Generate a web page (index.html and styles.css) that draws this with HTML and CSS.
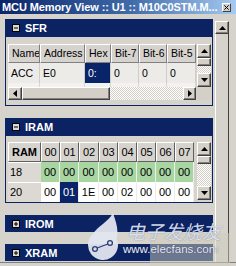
FILE: index.html
```html
<!DOCTYPE html>
<html>
<head>
<meta charset="utf-8">
<link rel="stylesheet" href="styles.css">
</head>
<body>
<div class="window">
  <div class="titlebar">
    <span class="title">MCU Memory View :: U1 :: M10C0STM.M...</span>
    <span class="close"><svg width="7" height="7" viewBox="0 0 7 7"><path d="M0.5 0.5L6.5 6.5M6.5 0.5L0.5 6.5" stroke="#000" stroke-width="1.4"/></svg></span>
  </div>
  <div class="client">
    <div class="panels">
      <section class="sec">
        <div class="sec-head"><svg class="tog" width="8" height="8" viewBox="0 0 8 8"><rect x="0.5" y="0.5" width="7" height="7" fill="#d8d8d8" stroke="#000"/><path d="M2 4H6" stroke="#000"/></svg><span>SFR</span></div>
        <div class="sec-body sfr-body">
          <div class="grid sfr-grid">
            <div class="hc">Name</div><div class="hc">Address</div><div class="hc">Hex</div><div class="hc">Bit-7</div><div class="hc">Bit-6</div><div class="hc">Bit-5</div>
            <div class="dc">ACC</div><div class="dc">E0</div><div class="dc sel">0:</div><div class="dc">0</div><div class="dc">0</div><div class="dc">0</div>
            <div class="pc"></div><div class="pc"></div><div class="pc"></div><div class="pc"></div><div class="pc"></div><div class="pc"></div>
          </div>
          <div class="vscroll v-sfr">
            <div class="sbtn"><svg width="7" height="4" viewBox="0 0 7 4"><path d="M3.5 0L7 4H0Z"/></svg></div>
            <div class="thumb-v"></div>
            <div class="track"></div>
            <div class="sbtn"><svg width="7" height="4" viewBox="0 0 7 4"><path d="M0 0H7L3.5 4Z"/></svg></div>
          </div>
          <div class="hscroll">
            <div class="sbtn hb"><svg width="4" height="7" viewBox="0 0 4 7"><path d="M0 3.5L4 0V7Z"/></svg></div>
            <div class="thumb-h"></div>
            <div class="track"></div>
            <div class="sbtn hb"><svg width="4" height="7" viewBox="0 0 4 7"><path d="M0 0L4 3.5L0 7Z"/></svg></div>
          </div>
          <div class="corner"></div>
        </div>
      </section>
      <section class="sec">
        <div class="sec-head"><svg class="tog" width="8" height="8" viewBox="0 0 8 8"><rect x="0.5" y="0.5" width="7" height="7" fill="#d8d8d8" stroke="#000"/><path d="M2 4H6" stroke="#000"/></svg><span>IRAM</span></div>
        <div class="sec-body iram-body">
          <div class="grid iram-grid">
            <div class="rh ram">RAM</div><div class="rh">00</div><div class="rh">01</div><div class="rh">02</div><div class="rh">03</div><div class="rh">04</div><div class="rh">05</div><div class="rh">06</div><div class="rh">07</div>
            <div class="lab">18</div><div class="g">00</div><div class="g">00</div><div class="g">00</div><div class="g">00</div><div class="g">00</div><div class="g">00</div><div class="g">00</div><div class="g">00</div>
            <div class="lab">20</div><div class="w">00</div><div class="w sel">01</div><div class="w">1E</div><div class="w">00</div><div class="w">02</div><div class="w">00</div><div class="w">00</div><div class="w">00</div>
          </div>
          <div class="vscroll v-iram">
            <div class="sbtn"><svg width="7" height="4" viewBox="0 0 7 4"><path d="M3.5 0L7 4H0Z"/></svg></div>
            <div class="thumb-v"></div>
            <div class="track"></div>
            <div class="sbtn"><svg width="7" height="4" viewBox="0 0 7 4"><path d="M0 0H7L3.5 4Z"/></svg></div>
          </div>
        </div>
      </section>
      <section class="sec">
        <div class="sec-head closed"><svg class="tog" width="8" height="8" viewBox="0 0 8 8"><rect x="0.5" y="0.5" width="7" height="7" fill="#d8d8d8" stroke="#000"/><path d="M2 4H6M4 2V6" stroke="#000"/></svg><span>IROM</span></div>
      </section>
      <section class="sec">
        <div class="sec-head closed"><svg class="tog" width="8" height="8" viewBox="0 0 8 8"><rect x="0.5" y="0.5" width="7" height="7" fill="#d8d8d8" stroke="#000"/><path d="M2 4H6M4 2V6" stroke="#000"/></svg><span>XRAM</span></div>
      </section>
    </div>
    <div class="outer-scroll">
      <div class="sbtn obtn"><svg width="7" height="4" viewBox="0 0 7 4"><path d="M3.5 0L7 4H0Z"/></svg></div>
      <div class="othumb"></div>
    </div>
  </div>
  <div class="watermark">
    <div class="wm-box"></div>
    <svg class="wm-logo" width="36" height="50" viewBox="0 0 36 50">
      <path d="M6.4 22.4C12 14 22 10 27 1C30 10 33 18 30.6 26.7A15 15 0 1 1 6.4 22.4Z" fill="#e2e6ee" fill-opacity="0.95"/>
      <circle cx="9" cy="37" r="2.4" fill="none" stroke="#2a3d78" stroke-width="1.3"/>
      <circle cx="24" cy="31" r="2.4" fill="none" stroke="#2a3d78" stroke-width="1.3"/>
      <path d="M11.2 36L21.8 32" stroke="#2a3d78" stroke-width="1.3"/>
    </svg>
    <div class="wm-cn">电子发烧友</div>
    <div class="wm-url">www.elecfans.com</div>
  </div>
</div>
</body>
</html>
```

FILE: styles.css
```css
* { box-sizing: border-box; }
html, body { margin: 0; padding: 0; }
body {
  width: 236px;
  height: 266px;
  overflow: hidden;
  background: #d4d0c8;
  font-family: "Liberation Sans", Arial, sans-serif;
  font-size: 10.5px;
  color: #000;
}
.window {
  position: relative;
  width: 236px;
  height: 266px;
  background: #d6d3cd;
}
.titlebar {
  height: 14px;
  display: flex;
  align-items: center;
  padding-left: 2px;
  background: linear-gradient(to right, #0a246a 0%, #3f6aa8 55%, #a6caf0 100%);
}
.title {
  flex: 1;
  color: #fff;
  font-weight: bold;
  font-size: 11px;
  letter-spacing: -0.1px;
  line-height: 14px;
  white-space: nowrap;
  overflow: hidden;
}
.close {
  width: 9px;
  height: 9px;
  margin-right: 5px;
  margin-left: 2px;
  background: #d4d0c8;
  border: 1px solid;
  border-color: #fff #404040 #404040 #fff;
  display: flex;
  align-items: center;
  justify-content: center;
}
.close svg { width: 5px; height: 5px; }
.client {
  display: flex;
  height: 249px;
  padding-top: 5px;
  border-bottom: 1px solid #808080;
}
.panels {
  width: 208px;
  margin-left: 5px;
}
.sec { margin-bottom: 12px; }
.sec-head {
  height: 18px;
  background: #0b2263;
  display: flex;
  align-items: center;
  padding-left: 7px;
  gap: 5px;
  color: #fff;
  font-weight: bold;
  font-size: 11px;
}
.sec-head.closed { height: 17px; }
.tog { display: block; flex: none; }
.sec-body {
  border: 1px solid #0b2263;
  border-top: 0;
  padding: 7px 1px 5px 2px;
  display: grid;
}
.sfr-body {
  grid-template-columns: 188px 14px;
  grid-template-rows: 43px 13px;
  column-gap: 1px;
}
.iram-body {
  padding: 6px 1px 0 2px;
  grid-template-columns: 186px 14px;
  column-gap: 3px;
}
.grid { display: grid; overflow: hidden; }
.sfr-grid {
  grid-template-columns: 32px 45px 26px 28px 28px 29px;
  grid-template-rows: 19px 20px 4px;
  background: #f2f0ef;
}
.hc {
  background: #d6d3ce;
  border-top: 1px solid #fff;
  border-left: 1px solid #fff;
  border-right: 1px solid #808080;
  border-bottom: 1px solid #808080;
  padding-left: 3px;
  line-height: 17px;
  white-space: nowrap;
  overflow: hidden;
}
.dc {
  background: #ecebe8;
  border-right: 1px solid #cfcdc8;
  padding-left: 3px;
  line-height: 20px;
}
.pc { background: #f3f2f0; border-right: 1px solid #d8d6d2; }
.sel { background: #0a246a; color: #fff; }
.iram-grid {
  grid-template-columns: 33px 19px 19px 20px 19px 19px 19px 19px 19px;
  grid-template-rows: 20px 20px 20px;
  font-size: 11px;
}
.rh {
  background: #d6d3ce;
  border-top: 1px solid #fff;
  border-left: 1px solid #fff;
  border-right: 1px solid #606060;
  border-bottom: 1px solid #606060;
  text-align: center;
  line-height: 18px;
}
.rh.ram { font-weight: bold; }
.lab {
  background: #dcd9d4;
  border-top: 1px solid #fff;
  padding-left: 2px;
  line-height: 19px;
}
.g {
  background: #a8d5a2;
  border-right: 1px solid #e8f3e6;
  text-align: center;
  line-height: 20px;
}
.w {
  background: #fff;
  border-right: 1px solid #ececec;
  text-align: center;
  line-height: 20px;
}
.w.sel { background: #0a246a; color: #fff; }
.vscroll { display: flex; flex-direction: column; }
.v-iram { height: 58px; }
.sbtn {
  flex: none;
  height: 14px;
  background: #d4d0c8;
  border: 1px solid;
  border-color: #fff #404040 #404040 #fff;
  box-shadow: inset -1px -1px #808080;
  display: flex;
  align-items: center;
  justify-content: center;
}
.sbtn svg { display: block; fill: #000; }
.thumb-v {
  flex: none;
  height: 8px;
  background: #d4d0c8;
  border: 1px solid;
  border-color: #fff #404040 #404040 #fff;
  box-shadow: inset -1px -1px #808080;
}
.track {
  flex: 1;
  background: repeating-conic-gradient(#d4d0c8 0 25%, #fff 0 50%) 0 0 / 2px 2px;
}
.hscroll { display: flex; height: 13px; }
.hb { width: 14px; height: 13px; }
.hscroll .hb:last-child { width: 13px; }
.thumb-h {
  flex: none;
  width: 88px;
  background: #d4d0c8;
  border: 1px solid;
  border-color: #fff #404040 #404040 #fff;
  box-shadow: inset -1px -1px #808080;
}
.corner { background: #d4d0c8; }
.outer-scroll {
  width: 14px;
  margin-left: 2px;
  margin-top: 2px;
  display: flex;
  flex-direction: column;
}
.obtn { height: 13px; width: 14px; }
.othumb {
  flex: 1;
  background: #d6d3cd;
  border-left: 1px solid #fff;
  border-right: 1px solid #404040;
}
.watermark {
  position: absolute;
  left: 0;
  top: 0;
  width: 236px;
  height: 266px;
  pointer-events: none;
}
.wm-box {
  position: absolute;
  left: 150px;
  top: 233px;
  width: 80px;
  height: 33px;
  background: rgba(205, 203, 190, 0.5);
}
.wm-logo {
  position: absolute;
  left: 86px;
  top: 212px;
}
.wm-cn {
  position: absolute;
  left: 126px;
  top: 220px;
  font-family: "Noto Sans CJK SC", sans-serif;
  font-size: 19px;
  line-height: 22px;
  font-style: italic;
  color: rgba(232, 238, 252, 0.9);
  text-shadow: 0 0 1px rgba(40, 50, 90, 0.6);
}
.wm-url {
  position: absolute;
  left: 123px;
  top: 243px;
  font-family: "Liberation Sans", Arial, sans-serif;
  font-size: 11.5px;
  line-height: 13px;
  color: rgba(245, 247, 255, 0.95);
  text-shadow: 0 0 1px #333a55;
}
```
